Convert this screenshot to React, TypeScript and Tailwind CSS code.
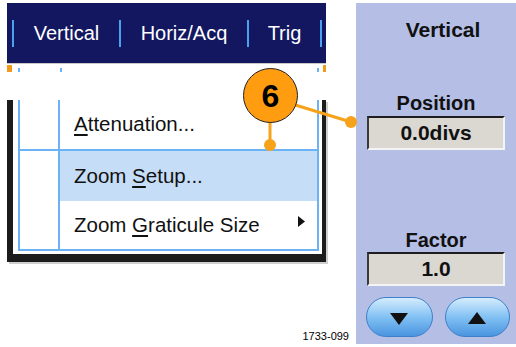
import React from "react";

const Sep = () => <div className="w-[2px] h-[27px] bg-[#4d9ff0]" />;

export default function App() {
  return (
    <div className="relative w-[516px] h-[347px] bg-white overflow-hidden flex font-['Liberation_Sans',Arial,sans-serif]">
      {/* Left side */}
      <div className="w-[356px] flex flex-col pt-[3px] pl-[7px]">
        {/* Tab bar */}
        <div className="w-[319px] h-[60px] bg-[#13175f] flex items-center pl-[5px] text-white text-[20px]">
          <Sep />
          <div className="w-[105px] text-center">Vertical</div>
          <Sep />
          <div className="w-[126px] text-center">Horiz/Acq</div>
          <Sep />
          <div className="w-[71px] text-center">Trig</div>
          <Sep />
        </div>
        {/* strip */}
        <div className="w-[319px] h-[37px] bg-white border-t border-[#c8c8c8] flex items-start">
          <div className="w-[5px] h-[7px] bg-[#f39a1c] mt-[1px]" />
          <div className="w-[2px] h-[4px] bg-[#6cb2f6] mt-[4px] ml-[6px]" />
          <div className="w-[2px] h-[4px] bg-[#6cb2f6] mt-[4px] ml-[40px]" />
          <div className="w-[2px] h-[4px] bg-[#6cb2f6] mt-[4px] ml-[255px]" />
          <div className="w-[3px] h-[7px] bg-[#f39a1c] mt-[1px] ml-auto" />
        </div>
        {/* menu */}
        <div className="w-[319px] bg-white border-l-[6px] border-r-[4px] border-b-[8px] border-[#1c1c1c] pl-[5px] pr-[3px] pb-[3px] shadow-[2px_2px_0_#cfcfcf] text-[20.5px] text-[#111]">
          <div className="border-l-2 border-r-2 border-b-2 border-[#6cb2f6]">
            <div className="flex h-[51px] border-b-2 border-[#6cb2f6]">
              <div className="w-[40px] border-r-2 border-[#6cb2f6]" />
              <div className="flex-1 flex items-center pl-[14px]">
                <span><span className="underline underline-offset-[3px]">A</span>ttenuation...</span>
              </div>
            </div>
            <div className="flex h-[50px]">
              <div className="w-[40px] border-r-2 border-[#6cb2f6]" />
              <div className="flex-1 flex items-center pl-[14px] bg-[#c6ddf7]">
                <span>Zoom <span className="underline underline-offset-[3px]">S</span>etup...</span>
              </div>
            </div>
            <div className="flex h-[48px]">
              <div className="w-[40px] border-r-2 border-[#6cb2f6]" />
              <div className="flex-1 flex items-center pl-[14px]">
                <span>Zoom <span className="underline underline-offset-[3px]">G</span>raticule Size</span>
                <svg className="ml-auto mr-[12px] mb-[8px]" width="7" height="11" viewBox="0 0 7 11">
                  <path d="M0 0 L7 5.5 L0 11 Z" fill="#111" />
                </svg>
              </div>
            </div>
          </div>
        </div>
        <div className="mt-[68px] self-end pr-[7px] text-[11px] leading-[12px] text-black">1733-099</div>
      </div>

      {/* Right panel */}
      <div className="mt-[3px] w-[160px] h-[341px] bg-[#b5bfe6] flex flex-col items-center text-[#111] font-bold">
        <div className="mt-[15px] pl-[14px] text-[21px] leading-[24px]">Vertical</div>
        <div className="mt-[49px] text-[20px] leading-[24px]">Position</div>
        <div className="mt-[1px] w-[138px] h-[34px] bg-[#dad8d1] border-2 border-t-[#1e1e1e] border-l-[#3a3a3a] border-r-[#f4f4f4] border-b-[#f4f4f4] flex items-center justify-center text-[21px]">
          0.0divs
        </div>
        <div className="mt-[78px] text-[20px] leading-[24px]">Factor</div>
        <div className="w-[138px] h-[34px] bg-[#dad8d1] border-2 border-t-[#1e1e1e] border-l-[#3a3a3a] border-r-[#f4f4f4] border-b-[#f4f4f4] flex items-center justify-center text-[21px]">
          1.0
        </div>
        <div className="mt-[11px] flex gap-[12px] pl-[3px]">
          <div className="w-[67px] h-[40px] rounded-[20px] border border-[#3f7fc8] bg-gradient-to-b from-[#d4ecfd] via-[#82c1f3] to-[#4a95e0] flex items-center justify-center">
            <svg width="18" height="12" viewBox="0 0 18 12" className="mt-[4px]">
              <path d="M0 0 L18 0 L9 12 Z" fill="#111" />
            </svg>
          </div>
          <div className="w-[65px] h-[40px] rounded-[20px] border border-[#3f7fc8] bg-gradient-to-b from-[#d4ecfd] via-[#82c1f3] to-[#4a95e0] flex items-center justify-center">
            <svg width="18" height="12" viewBox="0 0 18 12" className="mt-[2px]">
              <path d="M9 0 L18 12 L0 12 Z" fill="#111" />
            </svg>
          </div>
        </div>
      </div>

      {/* Callout 6 */}
      <svg className="absolute left-0 top-0 pointer-events-none" width="516" height="347">
        <line x1="270" y1="120" x2="270" y2="145" stroke="#f7a21b" strokeWidth="3" />
        <line x1="292" y1="104" x2="351" y2="122" stroke="#f7a21b" strokeWidth="3" />
        <circle cx="270" cy="145" r="6" fill="#f7a21b" />
        <circle cx="351" cy="122" r="6" fill="#f7a21b" />
      </svg>
      <div className="absolute left-[243px] top-[68px] w-[55px] h-[55px] rounded-full bg-[#ff9c0f] border-[1.5px] border-[#222] flex items-center justify-center text-[32px] font-bold text-black leading-none">
        6
      </div>
    </div>
  );
}
